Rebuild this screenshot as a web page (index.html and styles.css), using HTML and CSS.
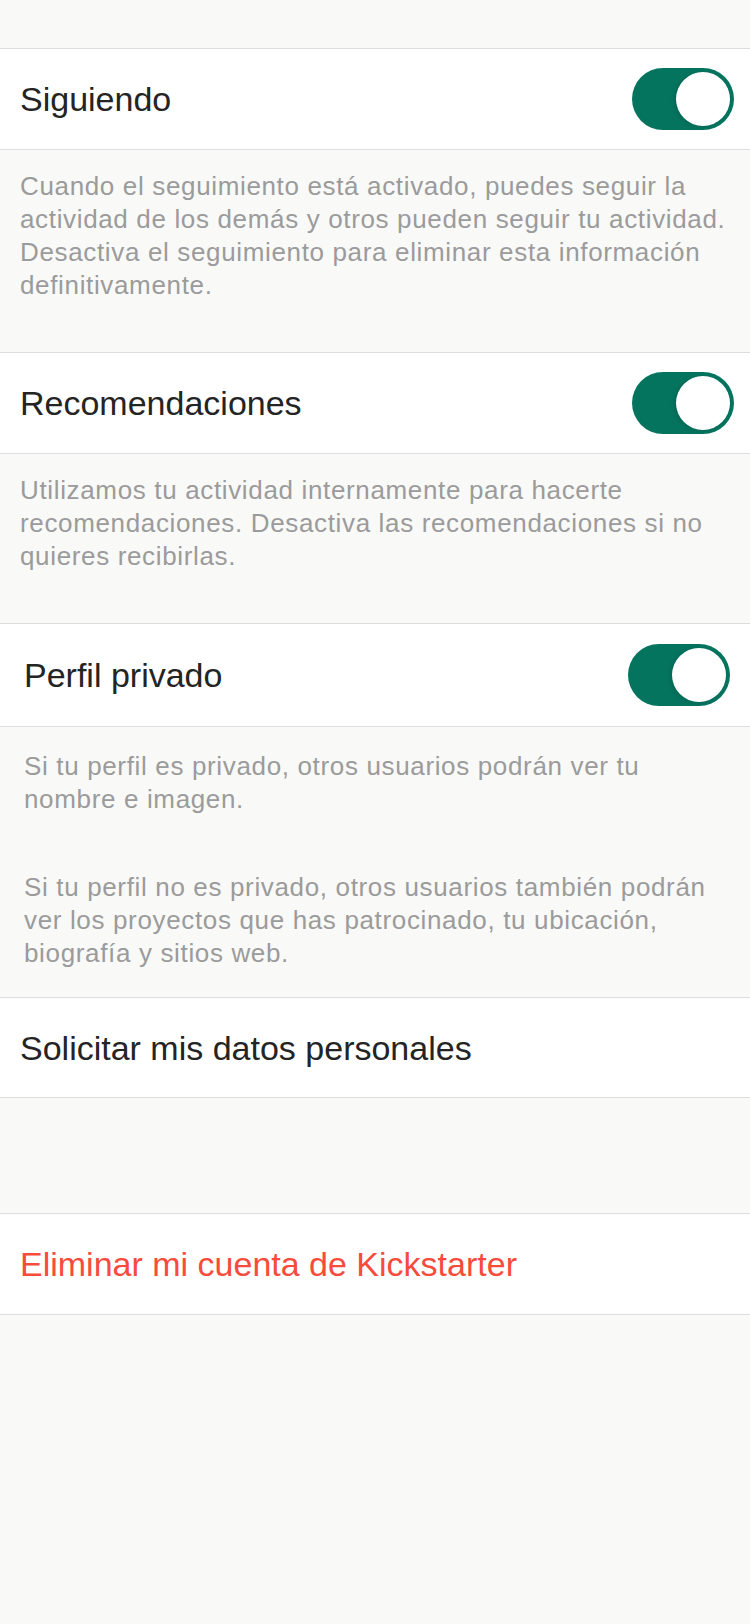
FILE: index.html
```html
<!DOCTYPE html>
<html lang="es">
<head>
<meta charset="utf-8">
<title>Privacidad</title>
<link rel="stylesheet" href="styles.css">
</head>
<body>
<main class="settings">
  <section class="group">
    <div class="row">
      <span class="label">Siguiendo</span>
      <div class="toggle"><span class="knob"></span></div>
    </div>
    <div class="note">
      <p>Cuando el seguimiento está activado, puedes seguir la<br>actividad de los demás y otros pueden seguir tu actividad.<br>Desactiva el seguimiento para eliminar esta información<br>definitivamente.</p>
    </div>
  </section>

  <section class="group">
    <div class="row">
      <span class="label">Recomendaciones</span>
      <div class="toggle"><span class="knob"></span></div>
    </div>
    <div class="note">
      <p>Utilizamos tu actividad internamente para hacerte<br>recomendaciones. Desactiva las recomendaciones si no<br>quieres recibirlas.</p>
    </div>
  </section>

  <section class="group group-inset">
    <div class="row row-tall">
      <span class="label">Perfil privado</span>
      <div class="toggle"><span class="knob"></span></div>
    </div>
    <div class="note note-double">
      <p>Si tu perfil es privado, otros usuarios podrán ver tu<br>nombre e imagen.</p>
      <p>Si tu perfil no es privado, otros usuarios también podrán<br>ver los proyectos que has patrocinado, tu ubicación,<br>biografía y sitios web.</p>
    </div>
  </section>

  <section class="group">
    <div class="row row-short">
      <span class="label">Solicitar mis datos personales</span>
    </div>
  </section>

  <section class="group group-spaced">
    <div class="row">
      <span class="label label-danger">Eliminar mi cuenta de Kickstarter</span>
    </div>
  </section>
</main>
</body>
</html>
```
FILE: styles.css
```css
* {
  box-sizing: border-box;
}

html, body {
  margin: 0;
  padding: 0;
  background: #f9f9f8;
}

body {
  font-family: "Liberation Sans", Arial, Helvetica, sans-serif;
  width: 750px;
  min-height: 1624px;
}

.settings {
  display: flex;
  flex-direction: column;
  padding-top: 48px;
}

.group {
  display: flex;
  flex-direction: column;
}

.group-spaced {
  margin-top: 115px;
}

.row {
  height: 102px;
  display: flex;
  align-items: center;
  justify-content: space-between;
  padding: 0 16px 0 20px;
  background: #ffffff;
  border-top: 1px solid #dddddd;
  border-bottom: 1px solid #dddddd;
}

.row-tall {
  height: 104px;
}

.row-short {
  height: 101px;
}

.group-inset .row {
  padding: 0 20px 0 24px;
}

.label {
  font-size: 34px;
  color: #242424;
  line-height: 40px;
}

.label-danger {
  color: #f84b3b;
}

.toggle {
  width: 102px;
  height: 62px;
  border-radius: 31px;
  background: #05745f;
  padding: 4px;
  display: flex;
  justify-content: flex-end;
  align-items: center;
}

.knob {
  width: 54px;
  height: 54px;
  border-radius: 50%;
  background: #ffffff;
  box-shadow: -2px 1px 4px rgba(0, 0, 0, 0.12);
}

.note {
  padding: 20px 10px 50px 20px;
  font-size: 26px;
  line-height: 33px;
  letter-spacing: 0.65px;
  color: #9b9b9b;
}

.note p {
  margin: 0;
  white-space: nowrap;
}

.group-inset .note {
  padding: 23px 10px 27px 24px;
}

.note-double p + p {
  margin-top: 55px;
}
```
